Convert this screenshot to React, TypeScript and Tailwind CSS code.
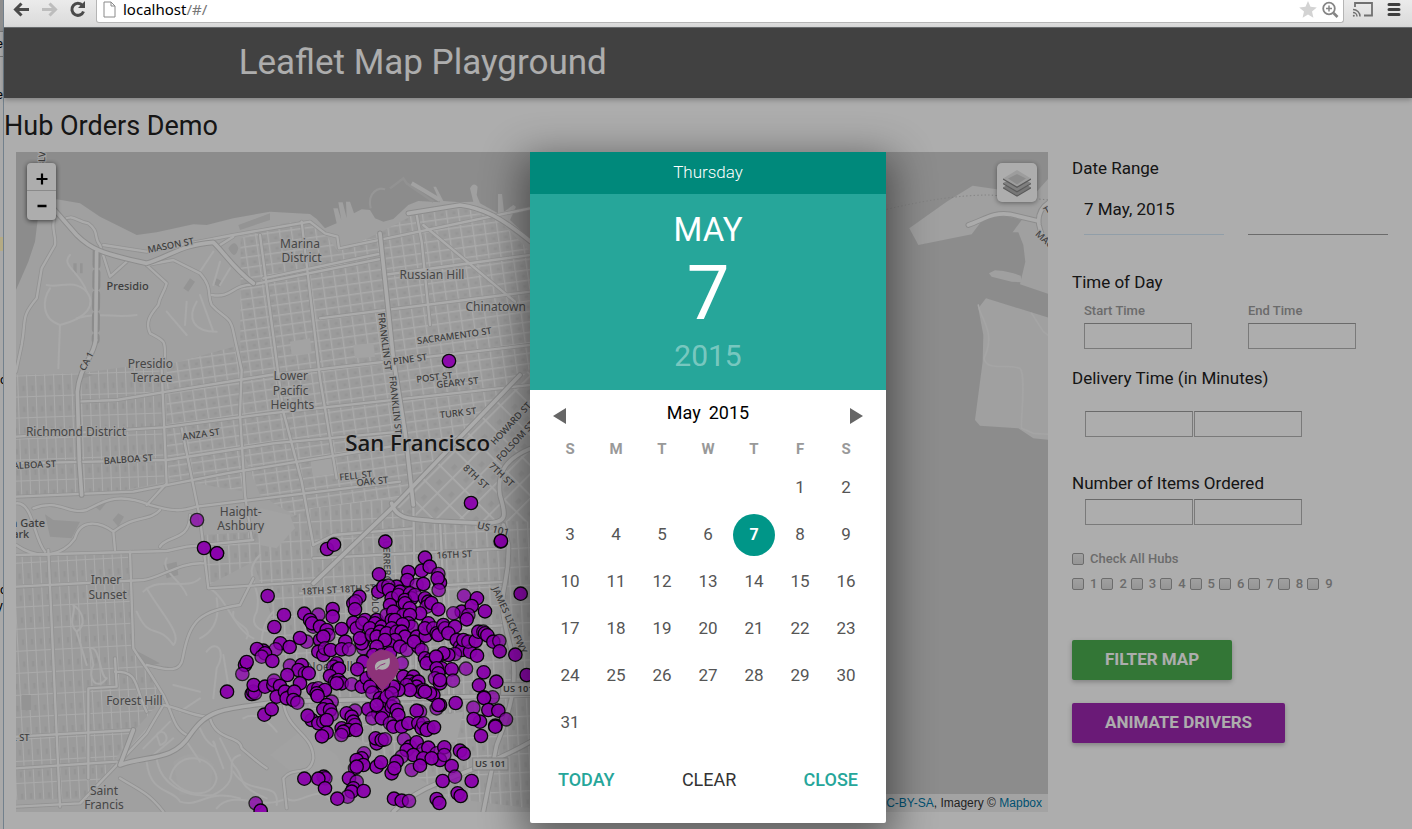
import React from "react";

type Label = [x: number, y: number, text: string, size: number, rotate?: number];

const PLACES: Label[] = [
  [451, 654, "Presidio", 36],
  [455, 697, "Terrace", 36],
  [900, 294, "Marina", 36],
  [905, 337, "District", 36],
  [1296, 387, "Russian Hill", 36],
  [1487, 483, "Chinatown", 36],
  [872, 692, "Lower", 36],
  [872, 735, "Pacific", 36],
  [877, 778, "Heights", 36],
  [228, 860, "Richmond District", 36],
  [722, 1099, "Haight-", 36],
  [722, 1142, "Ashbury", 36],
  [318, 1303, "Inner", 36],
  [323, 1347, "Sunset", 36],
  [1008, 1565, "Noe Valley", 36],
  [403, 1666, "Forest Hill", 36],
  [312, 1935, "Saint", 36],
  [312, 1977, "Francis", 36],
];

const STREETS: Label[] = [
  [512, 300, "MASON ST", 28, -11],
  [383, 420, "Presidio", 33],
  [259, 648, "CA 1", 28, -62],
  [1155, 590, "FRANKLIN ST", 28, 83],
  [1187, 780, "FRANKLIN ST", 28, 84],
  [1363, 572, "SACRAMENTO ST", 28, -8],
  [1230, 642, "PINE ST", 28, -8],
  [1303, 696, "POST ST", 28, -7],
  [1372, 712, "GEARY ST", 28, -6],
  [1374, 803, "TURK ST", 28, -7],
  [1532, 835, "HOWARD ST", 28, -47],
  [1546, 888, "FOLSOM ST", 28, -47],
  [1428, 995, "8TH ST", 28, 43],
  [1505, 988, "7TH ST", 28, 43],
  [603, 867, "ANZA ST", 28, -8],
  [385, 942, "BALBOA ST", 28, -4],
  [94, 959, "BALBOA ST", 28, -3],
  [74, 1131, "en Gate", 33],
  [52, 1164, "Park", 33],
  [1067, 991, "FELL ST", 28, -6],
  [1117, 1008, "OAK ST", 28, -5],
  [1480, 1150, "US 101", 30, 14],
  [1363, 1228, "16TH ST", 28, -3],
  [1015, 1333, "18TH ST 18TH ST", 28, -3],
  [1161, 1240, "GUERRERO", 28, 88],
  [1127, 1390, "DOLORES", 28, 88],
  [1530, 1425, "JAMES LICK FWY", 28, 66],
  [62, 1777, "L ST", 28],
  [125, 34, "BLVD", 28, -88],
  [3140, 195, "T", 28, -30],
  [3134, 282, "MAC", 28, 42],
];

const MAIN_ROADS = [
  "M160 190 L230 270 C270 310 300 325 440 355 C520 330 540 300 640 292 C670 320 700 370 760 415",
  "M287 585 C280 640 240 660 232 740 L238 950 245 1050",
  "M1140 265 L1180 640 1215 860 1240 1080",
  "M1225 205 L1380 180 C1450 190 1500 215 1592 290",
  "M940 1315 L1180 1085 1560 690",
  "M1175 1075 C1190 1130 1250 1120 1300 1128 L1460 1135 C1520 1130 1520 1120 1500 1050 C1490 980 1520 940 1592 910",
  "M1510 1140 L1525 1200 C1530 1350 1480 1320 1530 1500 C1560 1600 1530 1700 1490 1800 L1450 2000",
  "M400 1755 L360 1860 C440 1830 520 1850 570 1770 C620 1700 650 1690 850 1670 L1592 1650",
  "M2905 240 C2950 225 2980 200 3030 208 L3115 228",
  "M3150 170 Q3110 195 3117 240 Q3125 280 3150 300",
  "M1180 2000 C1280 1900 1400 1900 1592 1790",
];

const ROADS = [
  "M165 210 C150 250 170 270 165 300 L125 370 110 460 C60 520 80 520 65 600 L48 680",
  "M190 225 C220 205 230 230 265 235 C300 260 280 280 300 300 L330 395 380 350",
  "M440 360 L500 415 C490 450 480 450 475 480 C450 510 435 530 450 565 C500 590 495 590 495 640",
  "M440 360 L520 345 600 385 C640 430 620 450 635 480 C670 520 690 510 700 560 L725 675 720 810 735 1050 755 1180",
  "M635 450 C700 460 690 420 760 418 L1150 340",
  "M48 1230 L500 1218 560 1205 760 1185",
  "M48 1055 L400 1040 680 985 1200 900",
  "M310 300 L440 320 700 270 930 230 975 265 1012 275 1017 310 1590 190",
  "M700 275 L660 300",
  "M790 400 L1145 325",
  "M1270 240 L1545 470",
  "M1250 210 L1265 290 1290 540",
  "M905 230 L960 700 1010 1000",
  "M780 270 L850 800 905 1010 940 1200",
  "M960 520 L1590 440",
  "M1150 390 L1590 330",
  "M230 770 L350 765 500 740 810 690 1590 600",
  "M48 875 L490 847 810 805 1590 720",
  "M485 675 L500 1015 440 1080",
  "M545 850 L600 1120 625 1330 940 1310",
  "M48 955 L500 945 820 895 1200 860",
  "M145 1215 L180 1985",
  "M390 1220 L400 1510 C430 1560 430 1550 490 1650 C520 1710 520 1750 560 1770",
  "M48 1775 L400 1755",
  "M48 1870 L350 1850",
  "M48 1985 L240 1975 350 1860 440 1765 490 1680",
  "M440 1560 C490 1570 540 1590 548 1540 C570 1420 600 1400 720 1380 L760 1300",
  "M630 1720 C650 1790 720 1770 725 1810 C760 1840 770 1850 800 1870",
  "M850 1670 C860 1760 940 1765 940 1840 C930 1900 880 1860 850 1900 L860 1990",
  "M48 1075 C100 1070 100 1180 135 1220",
  "M100 1090 C180 1060 200 1110 260 1095 C310 1070 350 1040 450 1080 C520 1100 540 1100 590 1085 L1200 1010",
  "M48 1200 C120 1250 190 1230 225 1180 C240 1120 300 1130 340 1160 L345 1215 M340 1160 C400 1110 450 1130 480 1095",
  "M480 1205 C500 1170 570 1190 570 1110",
  "M48 1325 L430 1305 C480 1300 540 1250 610 1255",
  "M265 1900 L265 1630 350 1625 345 1540 M345 1580 C420 1580 400 1620 440 1700",
  "M360 1900 C430 1940 450 1950 490 2000",
  "M490 1680 C540 1690 570 1710 620 1715",
  "M940 1200 L1000 1170 1240 1150",
  "M1240 1080 L1250 1650 M1320 1130 L1350 1700",
  "M940 1240 L1520 1210 M900 1345 L1520 1310 M900 1480 L1520 1440",
];

const LANES = [
  "M140 420 C180 430 220 400 260 440 C290 480 260 520 180 540 C120 520 130 460 150 430",
  "M180 540 L175 670 M230 520 C300 500 340 520 410 510",
  "M500 500 L560 570 M560 470 L555 540 M600 450 L640 560 M590 470 C560 520 580 560 650 560",
  "M210 330 C180 360 240 380 260 440",
  "M640 320 L600 380 M660 350 L640 420 M690 370 L660 420",
  "M220 1380 C250 1400 260 1440 230 1460 C200 1430 230 1400 220 1380 M230 1460 L260 1560 M270 1510 C300 1500 300 1600 320 1600 C290 1640 260 1600 280 1560Z",
  "M410 1400 C450 1490 470 1430 520 1500 C550 1470 480 1400 440 1330 M430 1340 C480 1290 560 1340 600 1300",
  "M620 1520 C650 1480 680 1520 650 1570 L640 1660 M670 1530 L690 1650 M700 1400 C690 1440 760 1440 740 1480",
  "M400 1800 L470 1720 M430 1810 L510 1730 M460 1830 L520 1780 M470 1770 C490 1740 520 1790 480 1800Z",
  "M510 1900 C530 1810 640 1830 650 1900 C640 1960 560 1960 510 1900",
  "M440 1850 C450 1950 520 1930 540 1970 C600 1990 620 1930 720 1960",
  "M470 1840 C480 1920 560 1960 640 1950 C740 1900 660 1850 720 1830",
  "M660 1780 L700 1860 C740 1900 700 1920 800 1960 M640 1790 L670 1870",
  "M650 1990 C700 1930 780 2000 860 1960 C900 1990 960 1900 1000 1980",
  "M700 1880 C750 1960 840 1900 830 1980 M800 1540 C770 1500 790 1430 820 1400",
  "M630 1330 C680 1360 700 1450 760 1480 M780 1230 C720 1290 790 1320 770 1400 C740 1450 800 1470 830 1450",
  "M540 1700 L600 1660 M520 1620 L600 1640 M560 1790 L600 1850 M600 1750 C620 1800 660 1820 640 1790",
  "M730 1720 C760 1700 800 1720 830 1760 M650 1360 C660 1420 640 1460 600 1480 M500 1240 C480 1280 540 1300 560 1350",
];

const SHORE_LINES = [
  "M2935 480 C2940 520 2990 560 2952 640 C2960 680 3020 655 3060 670 C3080 690 3060 840 3065 850 L3100 865 3150 868",
  "M3095 505 L3130 560 3150 575",
];

const POINTS: [number, number][] = [
  [21,40],[351,27],[372,14],[526,5],[872,5],[645,53],[635,92],[659,80],[685,102],[595,96],[507,103],[592,120],[620,135],[690,128],[640,132],[683,115],[686,150],
  [505,155],[520,140],[560,140],[535,137],[537,150],[570,155],[545,175],[565,165],[600,160],[605,175],[585,180],[615,165],[173,168],[448,170],[430,190],[437,184],[435,208],
  [645,175],[655,185],[650,200],[664,189],[685,208],[630,220],[575,200],[585,190],[599,205],[540,195],[762,167],[801,175],[755,215],[785,198],[775,225],[770,238],[825,214],
  [932,161],[730,220],[222,225],[193,261],[283,221],[325,224],[368,207],[368,230],[300,240],[310,260],[306,250],[330,260],[350,270],[355,285],[330,300],[340,290],[395,267],
  [290,305],[270,294],[211,310],[239,321],[197,328],[160,332],[141,327],[165,340],[155,350],[187,363],[105,375],[110,366],[97,402],[51,455],[325,335],[340,345],[345,325],[362,330],
  [406,305],[395,328],[417,328],[430,248],[440,265],[465,240],[457,250],[500,240],[495,250],[460,300],[460,325],[455,310],[450,295],[480,265],[485,285],[515,260],[510,275],[500,290],
  [530,225],[565,225],[550,215],[545,240],[580,225],[555,240],[600,225],[595,250],[605,260],[578,253],[545,265],[530,280],[560,275],[575,275],[585,290],[555,300],[540,315],[525,300],
  [500,320],[490,345],[515,345],[460,365],[540,340],[570,320],[590,330],[625,320],[620,290],[612,305],[635,330],[647,287],[655,250],[645,265],[670,265],[680,280],[685,285],[700,255],[705,265],
  [735,260],[715,280],[740,300],[750,320],[755,330],[760,300],[780,335],[775,305],[797,303],[801,347],[805,275],[820,275],[825,280],[832,286],[850,305],[868,303],[869,334],[916,344],
  [950,405],[735,342],[715,345],[700,340],[645,355],[660,360],[650,370],[680,355],[678,350],[575,370],[695,385],[680,385],[685,400],[675,415],[690,430],[690,420],[725,388],[768,386],
  [821,397],[859,425],[807,436],[729,422],[580,410],[610,410],[600,425],[615,430],[625,425],[620,440],[630,455],[640,450],[670,465],[660,460],[645,455],[590,435],[600,450],[565,450],[550,440],
  [680,505],[690,495],[685,495],[737,489],[790,503],[810,545],[791,537],[822,472],[848,472],[822,474],[835,510],[865,512],[888,538],[856,557],[856,560],[813,588],[240,377],[275,375],[265,390],
  [232,405],[285,400],[296,400],[270,430],[380,370],[370,380],[380,390],[387,386],[360,408],[375,425],[385,420],[395,430],[380,430],[425,433],[455,440],[442,388],[470,415],[490,400],[500,425],
  [480,440],[515,460],[487,458],[510,475],[520,485],[530,470],[545,460],[520,430],[125,462],[130,455],[135,460],[131,435],[165,440],[190,435],[192,422],[210,438],[200,470],[225,455],[240,470],
  [230,475],[253,455],[250,480],[262,488],[163,524],[185,508],[310,448],[325,445],[345,450],[320,460],[323,468],[365,485],[350,495],[340,508],[360,510],[365,524],[305,540],[293,527],[325,550],
  [340,545],[350,540],[350,578],[336,589],[435,512],[410,520],[425,530],[430,545],[435,555],[395,565],[415,570],[400,575],[394,585],[438,570],[475,508],[505,520],[487,535],[520,520],[500,495],
  [545,500],[550,490],[560,510],[565,525],[515,535],[540,550],[550,560],[575,560],[595,550],[630,515],[620,512],[625,550],[635,565],[640,550],[655,565],[650,570],[672,562],[582,598],[500,610],
  [497,595],[515,600],[525,598],[600,620],[620,607],[590,630],[640,630],[655,623],[610,645],[640,655],[680,640],[690,660],[665,655],[703,622],[703,645],[725,678],[750,632],[761,641],[575,650],
  [560,665],[545,700],[553,685],[605,690],[630,677],[500,680],[513,667],[462,640],[455,655],[440,660],[460,675],[435,685],[440,680],[283,716],[341,710],[346,715],[325,716],[345,745],[417,715],
  [440,725],[430,745],[425,755],[461,753],[413,770],[382,776],[552,776],[575,782],[597,783],[680,777],[688,789],[698,723],[735,710],[785,723],[743,760],[752,768],[137,790],[152,812],
  [717,-537],[783,-111],[-39,-60],[-18,24],[21,40],[873,3],
];

function Text({ item, weight, fill }: { item: Label; weight: number; fill: string }) {
  const [x, y, text, size, rotate = 0] = item;
  return (
    <text
      x={x}
      y={y}
      fontSize={size}
      fontWeight={weight}
      fill={fill}
      stroke="#ededed"
      strokeWidth={7}
      strokeLinejoin="round"
      paintOrder="stroke"
      textAnchor="middle"
      dominantBaseline="central"
      transform={`rotate(${rotate} ${x} ${y})`}
    >
      {text}
    </text>
  );
}

function Grid({ id, w, h, angle, line = 5 }: { id: string; w: number; h: number; angle: number; line?: number }) {
  return (
    <pattern id={id} width={w} height={h} patternUnits="userSpaceOnUse" patternTransform={`rotate(${angle})`}>
      <rect width={w} height={h} fill="#e5e5e5" />
      <rect x={w * 0.55} y={h * 0.5} width={w * 0.25} height={h * 0.25} fill="#dcdcdc" />
      <path d={`M0 0H${w}M0 0V${h}`} stroke="#fbfbfb" strokeWidth={line * 2} />
    </pattern>
  );
}

function CityMap() {
  return (
    <svg
      viewBox="48 21 3096 1980"
      preserveAspectRatio="xMinYMin slice"
      className="block h-full w-full bg-[#cfcfcf] font-['Noto_Sans',sans-serif]"
      role="img"
      aria-label="Map of San Francisco with order locations"
    >
      <defs>
        <Grid id="north" w={36} h={31} angle={-8} line={4} />
        <Grid id="richmond" w={27} h={63} angle={-2} line={3} />
        <Grid id="sunset" w={27} h={66} angle={-3} line={3} />
        <Grid id="mission" w={31} h={56} angle={-3} line={4} />
        <Grid id="soma" w={52} h={64} angle={45} line={5} />
      </defs>
      <path
        fill="#ececec"
        d="M48 435 L85 350 105 290 113 225 130 170 170 163 240 175 300 215 350 240 410 270 470 262 580 238 620 240 700 220 810 200 930 207 950 222 975 250 1010 235 1000 190 1013 190 1024 225 1015 172 1028 172 1040 220 1038 170 1050 170 1062 205 1085 193 1110 195 1125 220 1150 230 1180 222 1225 180 1255 168 1320 172 1300 125 1308 125 1330 168 1380 172 1420 170 1410 130 Q1420 110 1433 125 L1430 150 1440 175 1494 205 1494 147 1506 147 1512 200 1540 180 1548 185 1530 225 1592 285 1592 2001 48 2001Z"
      />
      <path d="M1112 190 C1100 140 1140 125 1155 133" fill="none" stroke="#dedede" strokeWidth="6" />
      <path d="M1170 130 L1210 100 1220 115 1300 170" fill="none" stroke="#d8d8d8" strokeWidth="7" />
      <path d="M1235 115 L1320 165" stroke="#efefef" strokeWidth="12" />
      <path fill="#ececec" d="M2728 250 L2840 170 2918 122 2990 133 3110 140 3150 95 3150 448 3060 418 3076 350 3070 300 3055 262 3038 262 3065 225 3025 215 2970 210 2940 235 2915 268 2755 300Z" />
      <path fill="#ececec" d="M2967 385 L2985 376 3010 378 3040 385 3062 392 3065 412 3035 410 2975 395Z" />
      <path fill="#ececec" d="M2958 460 L3150 519 3150 885 3100 880 3055 850 2940 842 2925 825 2948 650 2950 570 2935 490Z" />
      <path d="M2660 193 Q2840 150 2970 150 L3150 165" fill="none" stroke="#bdbdbd" strokeWidth="3" strokeDasharray="4 7" />

      <path fill="url(#north)" d="M722 280 L850 235 930 225 985 280 1015 320 1135 265 1250 205 1400 190 1500 230 1592 320 1592 1000 1200 1300 780 1050 720 900Z" />
      <path fill="url(#north)" d="M500 660 L720 600 722 850 735 1040 500 1000Z" />
      <path fill="url(#richmond)" d="M48 690 L238 685 490 650 500 1010 350 1040 48 1055Z" />
      <path fill="url(#sunset)" d="M48 1230 L390 1220 400 1510 490 1660 400 1760 270 1960 48 1965Z" />
      <path fill="url(#mission)" d="M610 1170 L760 1160 940 1090 1180 1060 1592 1100 1592 1990 1350 1960 1100 1800 960 1700 850 1650 810 1400 760 1250 625 1320Z" />
      <path fill="url(#soma)" d="M1190 1085 L1592 670 1592 1130 1250 1120Z" />
      <path fill="#f0f0f0" d="M780 1090 L870 1110 885 1150 830 1210 780 1200Z M930 935 L1005 930 1010 985 940 995Z M870 590 L930 580 935 625 875 630Z M1060 600 L1120 595 1125 635 1065 640Z" />
      <path fill="#efefef" d="M520 1850 Q590 1800 640 1860 L630 1940 540 1950Z M810 1830 L900 1760 1010 1830 1040 1900 900 1900Z M1250 1720 L1390 1700 1370 1790 1240 1800Z" />
      <path fill="#dcdcdc" d="M135 1108 L160 1125 240 1130 215 1180 150 1175Z M285 1085 L305 1065 318 1075 300 1097Z M338 1125 L355 1105 372 1115 355 1145Z M240 680 L280 690 250 700Z M405 1515 L480 1555 440 1565Z M490 1260 L530 1250 535 1290 500 1300Z" />
      <path fill="#dadada" d="M715 240 L810 205 810 225 720 255Z M550 430 L570 400 585 410 565 440Z M650 400 l18 10 -10 16 -16 -8Z M685 310 q20 -30 30 0 q-10 40 -30 0Z M220 355 h10 v30 h-10Z M240 355 h8 v30 h-8Z M65 1650 h28 v45 h-28Z" />

      <g fill="none" strokeLinecap="round" strokeLinejoin="round">
        <g stroke="#f9f9f9" strokeWidth="6">
          {LANES.map((d) => <path key={d} d={d} />)}
        </g>
        <g stroke="#f3f3f3" strokeWidth="5">
          {SHORE_LINES.map((d) => <path key={d} d={d} />)}
        </g>
        <g stroke="#d8d8d8" strokeWidth="12">
          {ROADS.map((d) => <path key={d} d={d} />)}
        </g>
        <g stroke="#fcfcfc" strokeWidth="7">
          {ROADS.map((d) => <path key={d} d={d} />)}
        </g>
        <g stroke="#cfcfcf" strokeWidth="17">
          {MAIN_ROADS.map((d) => <path key={d} d={d} />)}
          <path d="M290 320 L287 585" strokeDasharray="40 24" strokeWidth="24" />
        </g>
        <g stroke="#fcfcfc" strokeWidth="11">
          {MAIN_ROADS.map((d) => <path key={d} d={d} />)}
          <path d="M290 320 L287 585" />
        </g>
      </g>

      {STREETS.map((item, i) => <Text key={i} item={item} weight={500} fill="#5c5c5c" />)}
      {PLACES.map((item, i) => <Text key={i} item={item} weight={400} fill="#686868" />)}
      <Text item={[1253, 892, "San Francisco", 67]} weight={500} fill="#222222" />

      <g fontSize="28" fontWeight="600" fill="#555" textAnchor="middle">
        <rect x="1502" y="1613" width="110" height="38" fill="#f0f0f0" stroke="#c4c4c4" strokeWidth="3" />
        <text x="1555" y="1642">US 101</text>
        <rect x="1418" y="1839" width="106" height="36" fill="#f0f0f0" stroke="#c4c4c4" strokeWidth="3" />
        <text x="1471" y="1867">US 101</text>
      </g>

      <g transform="translate(630 1185)" fill="#cc00ff" stroke="#000000" strokeWidth="4">
        {POINTS.map(([cx, cy], i) => (
          <circle key={i} cx={cx} cy={cy} r="20" opacity={i % 4 === 0 ? 0.76 : 0.94} />
        ))}
      </g>

      <g transform="translate(630 1185)">
        <path fill="#d04bb3" d="M518 457 C510 435 469 415 469 379 A49 49 0 0 1 567 379 C567 415 526 435 518 457Z" />
        <path fill="#ffffff" d="M497 390 C488 368 508 360 524 359 Q533 358 538 353 C546 382 524 394 506 387 L499 391Z" />
        <path d="M500 386 Q509 374 526 370" fill="none" stroke="#d04bb3" strokeWidth="3" />
      </g>
    </svg>
  );
}

function BrowserBar() {
  return (
    <div className="flex h-7 items-start border-b border-[#6d7072] bg-linear-to-b from-[#ebebeb] to-[#dadada] pr-[10px]">
      <button aria-label="Back" className="ml-2 h-5 w-5">
        <svg viewBox="0 0 20 20" className="h-5 w-5" fill="none" stroke="#4a4a4a" strokeWidth="3">
          <path d="M17 9.500H4M9.500 3.500 3.500 9.500 9.500 15.500" />
        </svg>
      </button>
      <button aria-label="Forward" className="ml-2 h-5 w-5">
        <svg viewBox="0 0 20 20" className="h-5 w-5" fill="none" stroke="#bdbdbd" strokeWidth="3">
          <path d="M2 9.500H15M9.500 3.500 15.500 9.500 9.500 15.500" />
        </svg>
      </button>
      <button aria-label="Reload" className="ml-2 h-5 w-5">
        <svg viewBox="0 0 20 20" className="h-5 w-5" fill="none" stroke="#4a4a4a" strokeWidth="3">
          <path d="M14.500 5.500 A6 6 0 1 0 15.500 11.500" />
          <path d="M17 1v7h-7z" fill="#4a4a4a" stroke="none" />
        </svg>
      </button>
      <div className="ml-2 flex h-[23px] flex-1 items-start rounded-b-[3px] border border-t-0 border-[#b5b5b5] bg-white pr-1 pl-[6px]">
        <svg viewBox="0 0 13 17" className="mt-px h-[17px] w-[13px]" fill="#fff" stroke="#8a8a8a">
          <path d="M1 1h7l4 4v11H1zM8 1v4h4" />
        </svg>
        <div
          role="textbox"
          aria-label="Address"
          contentEditable
          suppressContentEditableWarning
          className="ml-[7px] flex-1 font-['Noto_Sans',sans-serif] text-[15px] leading-[19px] text-black outline-none"
        >
          localhost<span className="text-[#777]">/#/</span>
        </div>
        <svg viewBox="0 0 18 18" className="mt-px h-[18px] w-[18px]" fill="#d3d3d3">
          <path d="m9 0 2.500 5.800 6.300.6-4.800 4.200 1.400 6.200L9 13.500l-5.400 3.300L5 10.600.2 6.400l6.300-.6z" />
        </svg>
        <svg viewBox="0 0 18 18" className="mt-px ml-1 h-[18px] w-[18px]" fill="none" stroke="#858585">
          <circle cx="8" cy="7.500" r="5.800" strokeWidth="1.800" />
          <path d="M5 7.500h6M8 4.500v6" strokeWidth="1.500" />
          <path d="m12.500 12 4 4" strokeWidth="2.600" />
        </svg>
      </div>
      <button aria-label="Cast" className="ml-2 h-5 w-[22px]">
        <svg viewBox="0 0 22 20" className="h-5 w-[22px]" fill="none" stroke="#707070">
          <path d="M3 7V3h17v12.500h-8" strokeWidth="1.800" />
          <path d="M1 9.500a7 7 0 0 1 7 7M1 12.500a4 4 0 0 1 4 4" strokeWidth="1.500" />
          <circle cx="1.800" cy="15.800" r="1" fill="#707070" stroke="none" />
        </svg>
      </button>
      <button aria-label="Menu" className="ml-3 h-5 w-4">
        <svg viewBox="0 0 16 20" className="h-5 w-4" stroke="#3f3f3f" strokeWidth="3" strokeLinecap="round">
          <path d="M3 4.500h10M3 9.500h10M3 14.500h10" />
        </svg>
      </button>
    </div>
  );
}

function LayersIcon() {
  return (
    <svg viewBox="0 0 28 28" className="h-7 w-7">
      <path d="M0 18.500 14 26.500l14-8-3-2-11 6-11-6z" fill="#b0b0b0" />
      <path d="M0 18.800 14 27l14-8.200" fill="none" stroke="#858585" strokeWidth="1.200" />
      <path d="M0 14 14 22.500 28 14 14 7z" fill="#bdbdbd" />
      <path d="M0 14.500 14 22.700l14-8.200" fill="none" stroke="#858585" strokeWidth="1.200" />
      <path d="M0 9.500 14 1l14 8.500L14 18z" fill="#e8e8e8" />
      <path d="M5 9.500 14 5l9 4.500-9 6z" fill="#cfcfcf" />
      <path d="M0 10 14 18.300l14-8.300" fill="none" stroke="#858585" strokeWidth="1.400" />
    </svg>
  );
}

const box = "h-[26px] w-[108px] border border-[#b4b4b4] border-t-[#9c9c9c] bg-white px-1 text-sm outline-none";
const heading = "text-[17px] leading-6 text-[#212121]";
const check = "h-3 w-3 appearance-none rounded-[2px] border border-[#a0a0a0] bg-linear-to-b from-[#ececec] to-[#dcdcdc]";

function Filters() {
  return (
    <form className="w-1/4 px-3 pt-1" onSubmit={(e) => e.preventDefault()}>
      <h6 className={heading}>Date Range</h6>
      <div className="mt-[7px] flex">
        <div className="w-1/2 px-3">
          <input aria-label="From date" defaultValue="7 May, 2015" className="h-12 w-full border-b border-[#d6e9f8] bg-transparent pb-1 text-[17px] text-[#212121] outline-none" />
        </div>
        <div className="w-1/2 px-3">
          <input aria-label="To date" className="h-12 w-full border-b border-[#9e9e9e] bg-transparent text-[17px] outline-none" />
        </div>
      </div>
      <h6 className={`mt-[35px] ${heading}`}>Time of Day</h6>
      <div className="mt-2 flex text-[13px] leading-[18px] font-medium text-[#9e9e9e]">
        <div className="flex w-1/2 flex-col items-start gap-[3px] px-3">
          <label htmlFor="start">Start Time</label>
          <input id="start" className={box} />
        </div>
        <div className="flex w-1/2 flex-col items-start gap-[3px] px-3">
          <label htmlFor="end">End Time</label>
          <input id="end" className={box} />
        </div>
      </div>
      <h6 className={`mt-[17px] ${heading}`}>Delivery Time (in Minutes)</h6>
      <div className="mt-[21px] flex gap-px pl-[13px]">
        <input aria-label="Minimum minutes" className={box} />
        <input aria-label="Maximum minutes" className={box} />
      </div>
      <h6 className={`mt-[34px] ${heading}`}>Number of Items Ordered</h6>
      <div className="mt-1 flex gap-px pl-[13px]">
        <input aria-label="Minimum items" className={box} />
        <input aria-label="Maximum items" className={box} />
      </div>
      <label className="mt-6 flex items-center gap-[6px] text-[13px] leading-5 font-medium text-[#9e9e9e]">
        <input type="checkbox" className={check} />
        Check All Hubs
      </label>
      <div className="mt-[5px] flex gap-1 text-[13px] leading-5 font-medium text-[#9e9e9e]">
        {[1, 2, 3, 4, 5, 6, 7, 8, 9].map((n) => (
          <label key={n} className="flex items-center gap-[6px]">
            <input type="checkbox" className={check} />
            {n}
          </label>
        ))}
      </div>
      <div className="mt-[46px] flex flex-col items-start gap-[23px] text-[17px] font-bold text-white">
        <button className="h-10 rounded-[2px] bg-[#4caf50] px-[33px] shadow-[0_2px_5px_rgba(0,0,0,0.26)]">FILTER MAP</button>
        <button className="h-10 rounded-[2px] bg-[#9c27b0] px-[33px] shadow-[0_2px_5px_rgba(0,0,0,0.26)]">ANIMATE DRIVERS</button>
      </div>
    </form>
  );
}

const WEEKS: (number | null)[][] = [
  [null, null, null, null, null, 1, 2],
  [3, 4, 5, 6, 7, 8, 9],
  [10, 11, 12, 13, 14, 15, 16],
  [17, 18, 19, 20, 21, 22, 23],
  [24, 25, 26, 27, 28, 29, 30],
  [31, null, null, null, null, null, null],
];

function DatePicker() {
  return (
    <div role="dialog" aria-label="Choose a date" className="w-[356px] rounded-[2px] bg-white shadow-[0_12px_40px_8px_rgba(0,0,0,0.45)]">
      <div className="h-[42px] bg-[#00897b] text-center text-[17px] leading-10 font-light text-white">Thursday</div>
      <div className="h-[196px] bg-[#26a69a] pt-4 text-center text-white">
        <div className="text-[33px] leading-10">MAY</div>
        <div className="mt-[3px] text-[76px] leading-20">7</div>
        <div className="mt-[5px] text-[30px] leading-9 text-white/40">2015</div>
      </div>
      <div className="flex items-center justify-between px-[23px] pt-[11px]">
        <button aria-label="Previous month" className="h-6 w-[13px]">
          <svg viewBox="0 0 13 24" className="h-6 w-[13px]" fill="#666"><path d="M13 7v16L0 15z" /></svg>
        </button>
        <div className="flex gap-2 text-lg leading-6 text-black">
          <span>May</span>
          <span>2015</span>
        </div>
        <button aria-label="Next month" className="h-6 w-[13px]">
          <svg viewBox="0 0 13 24" className="h-6 w-[13px]" fill="#666"><path d="M0 7v16l13-8z" /></svg>
        </button>
      </div>
      <div className="px-[17px] pt-2">
        <table className="w-full table-fixed border-collapse text-center">
          <thead>
            <tr className="h-[31px] text-[15px] text-[#999]">
              {["S", "M", "T", "W", "T", "F", "S"].map((d, i) => <th key={i} className="p-0 pt-px font-bold">{d}</th>)}
            </tr>
          </thead>
          <tbody>
            {WEEKS.map((week, w) => (
              <tr key={w} className="h-[47px] text-[17px] text-[#555]">
                {week.map((day, d) => (
                  <td key={d} className="p-0">
                    {day === 7 ? (
                      <button className="h-[42px] w-[42px] rounded-full bg-[#009688] text-base font-bold text-white">7</button>
                    ) : day ? (
                      <button>{day}</button>
                    ) : null}
                  </td>
                ))}
              </tr>
            ))}
          </tbody>
        </table>
      </div>
      <div className="mt-4 flex h-9 items-center justify-between px-7 text-lg text-[#26a69a]">
        <button className="font-medium">TODAY</button>
        <button className="text-[#333]">CLEAR</button>
        <button className="font-medium">CLOSE</button>
      </div>
      <div className="h-[25px]" />
    </div>
  );
}

function WindowBehind() {
  return (
    <div aria-hidden="true" className="flex w-1 flex-col items-end overflow-hidden border-r border-[#72808c] bg-[#a9a9a9] text-[13px] leading-4 text-black">
      <div className="h-8 w-full border-b border-[#777] bg-[#8e8e8e]" />
      <div className="mt-1">e</div>
      <div className="mt-1 h-px w-full bg-[#777]" />
      <div className="mt-[30px]">e</div>
      <div className="mt-[134px] h-[14px] w-full bg-[#b5ab84]" />
      <div className="mt-[121px] self-start">c</div>
      <div className="mt-[194px] self-start">c</div>
      <div>y</div>
    </div>
  );
}

export default function App() {
  return (
    <div className="flex min-h-screen font-[Roboto,sans-serif]">
      <WindowBehind />
      <div className="flex min-w-0 flex-1 flex-col">
        <BrowserBar />
        <div className="relative flex-1 bg-white">
          <header className="h-[70px] bg-[#616161] shadow-[0_2px_5px_rgba(0,0,0,0.26)]">
            <h1 className="mx-auto w-2/3 text-[35px] leading-[70px] text-white">Leaflet Map Playground</h1>
          </header>
          <h2 className="pt-2 text-[27px] leading-10 text-[#212121]">Hub Orders Demo</h2>
          <div className="flex pt-[6px] pb-4">
            <div className="w-3/4 px-3">
              <div className="relative h-[660px] overflow-hidden">
                <CityMap />
                <div className="absolute top-[11px] left-[11px] flex w-[29px] flex-col overflow-hidden rounded-[4px] bg-white shadow-[0_1px_5px_rgba(0,0,0,0.65)]">
                  <button aria-label="Zoom in" className="flex h-7 items-center justify-center border-b border-[#ccc]">
                    <svg viewBox="0 0 12 12" className="mt-1 h-3 w-3" stroke="#000" strokeWidth="2.200"><path d="M0.500 6h11M6 0.500v11" /></svg>
                  </button>
                  <button aria-label="Zoom out" className="flex h-[29px] items-center justify-center">
                    <svg viewBox="0 0 12 12" className="h-3 w-3" stroke="#000" strokeWidth="2.400"><path d="M1.500 6h9" /></svg>
                  </button>
                </div>
                <button aria-label="Layers" className="absolute top-[11px] right-[11px] flex h-[39px] w-10 items-center justify-center rounded-[5px] bg-white shadow-[0_1px_5px_rgba(0,0,0,0.4)]">
                  <LayersIcon />
                </button>
                <div className="absolute right-0 bottom-0 bg-white/70 px-[6px] font-['Liberation_Sans',sans-serif] text-xs leading-[18px] text-[#333]">
                  <a href="#license" className="text-[#0078a8]">CC-BY-SA</a>, Imagery © <a href="#mapbox" className="text-[#0078a8]">Mapbox</a>
                </div>
              </div>
            </div>
            <Filters />
          </div>
          <div className="absolute inset-0 flex items-start justify-center overflow-hidden bg-black/32 pt-[124px]">
            <DatePicker />
          </div>
        </div>
      </div>
    </div>
  );
}
